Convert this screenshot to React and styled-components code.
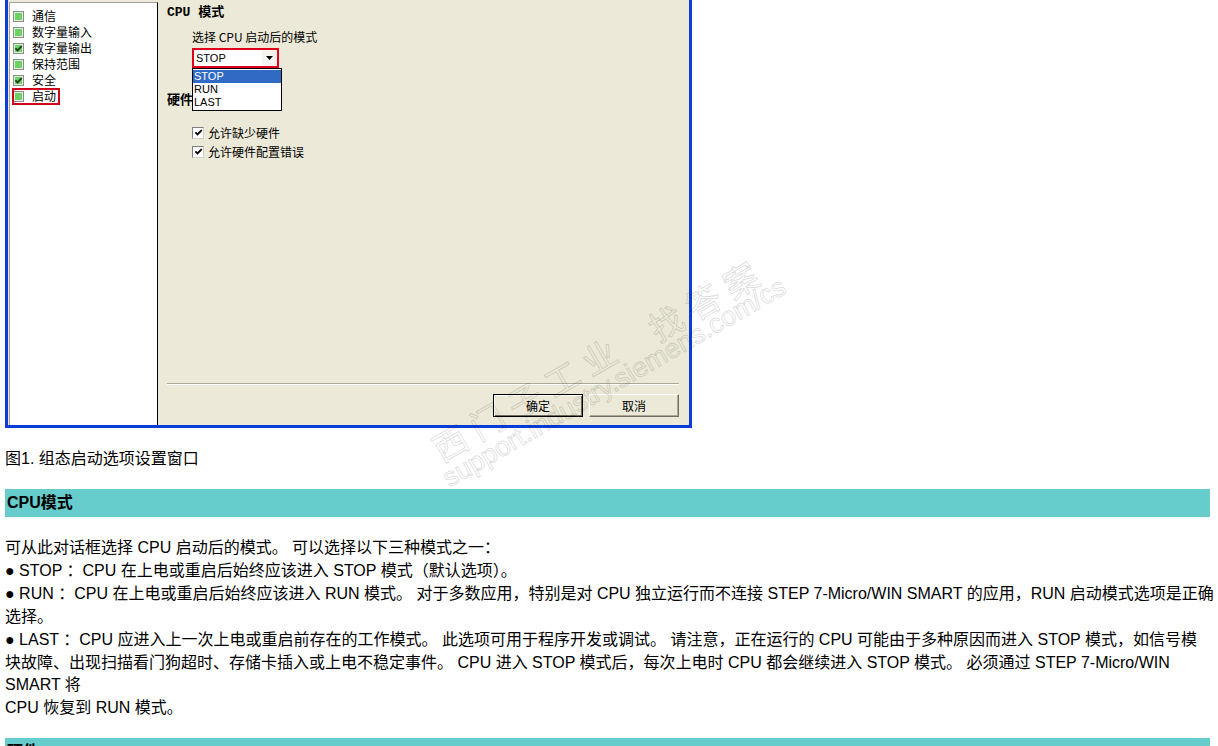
import styled, { createGlobalStyle } from 'styled-components'

const GlobalStyle = createGlobalStyle`
  html, body {
    margin: 0;
    padding: 0;
    overflow: hidden;
    background: #fff;
  }
  body {
    font-family: 'Liberation Sans', Arial, 'Noto Sans CJK SC', sans-serif;
    color: #000;
  }
`

const treeItems = [
  { label: '通信' },
  { label: '数字量输入' },
  { label: '数字量输出', checked: true },
  { label: '保持范围' },
  { label: '安全', checked: true },
  { label: '启动', marked: true },
]

const lines = [
  '可从此对话框选择 CPU 启动后的模式。 可以选择以下三种模式之一：',
  '● STOP ：CPU 在上电或重启后始终应该进入 STOP 模式（默认选项）。',
  '● RUN ：CPU 在上电或重启后始终应该进入 RUN 模式。 对于多数应用，特别是对 CPU 独立运行而不连接 STEP 7-Micro/WIN SMART 的应用，RUN 启动模式选项是正确',
  '选择。',
  '● LAST ：CPU 应进入上一次上电或重启前存在的工作模式。 此选项可用于程序开发或调试。 请注意，正在运行的 CPU 可能由于多种原因而进入 STOP 模式，如信号模',
  '块故障、出现扫描看门狗超时、存储卡插入或上电不稳定事件。 CPU 进入 STOP 模式后，每次上电时 CPU 都会继续进入 STOP 模式。 必须通过 STEP 7-Micro/WIN',
  'SMART 将',
  'CPU 恢复到 RUN 模式。',
]

const Tick = ({ color }) => (
  <svg width="9" height="9" viewBox="0 0 9 9">
    <path d="M1.4 4.3 L3.5 6.4 L7.7 2.1" fill="none" stroke={color} strokeWidth="1.8" />
  </svg>
)

const App = () => {
  return (
    <Page>
      <GlobalStyle />
      <Dialog>
        <Tree>
          {treeItems.map((item) => (
            <TreeRow key={item.label}>
              <TreeItem $marked={item.marked}>
                <TreeBox>{item.checked && <Tick color='#1d3f17' />}</TreeBox>
                {item.label}
              </TreeItem>
            </TreeRow>
          ))}
        </Tree>
        <Pane>
          <SectionTitle $top={0}>CPU 模式</SectionTitle>
          <Field>
            <FieldLabel>选择 CPU 启动后的模式</FieldLabel>
            <Select>
              <SelectValue>STOP</SelectValue>
              <ArrowButton>
                <svg width="7" height="4" viewBox="0 0 7 4">
                  <path d="M0 0 H7 L3.5 4 Z" fill='#000' />
                </svg>
              </ArrowButton>
            </Select>
            <Options>
              <Option $active>STOP</Option>
              <Option>RUN</Option>
              <Option>LAST</Option>
            </Options>
          </Field>
          <SectionTitle $top={26}>硬件选项</SectionTitle>
          <CheckList>
            <CheckRow>
              <CheckBox>
                <Tick color='#000' />
              </CheckBox>
              允许缺少硬件
            </CheckRow>
            <CheckRow>
              <CheckBox>
                <Tick color='#000' />
              </CheckBox>
              允许硬件配置错误
            </CheckRow>
          </CheckList>
          <Spacer />
          <Separator />
          <ButtonRow>
            <Button $default $w={90}>
              确定
            </Button>
            <Button $w={90}>取消</Button>
          </ButtonRow>
        </Pane>
      </Dialog>

      <Caption>图1. 组态启动选项设置窗口</Caption>
      <SectionBar $top={20}>CPU模式</SectionBar>
      <Body>
        {lines.map((line, i) => (
          <Line key={i}>{line}</Line>
        ))}
      </Body>
      <SectionBar $top={18}>硬件</SectionBar>

      <Watermark $x={435} $y={434} $size={34} $spacing={9} $cjk>
        西门子工业
      </Watermark>
      <Watermark $x={651} $y={314} $size={34} $spacing={9} $cjk>
        找答案
      </Watermark>
      <Watermark $x={445} $y={467} $size={27} $spacing={0}>
        support.industry.siemens.com/cs
      </Watermark>
    </Page>
  )
}

const Page = styled.div`
  position: relative;
  width: 1205px;
  padding: 0 8px 0 5px;
`

const Dialog = styled.div`
  box-sizing: border-box;
  width: 687px;
  height: 428px;
  display: flex;
  background: #ece9d8;
  border: 3px solid #0a3dd6;
  border-top: none;
  font-family: 'Noto Sans CJK SC', 'Liberation Sans', sans-serif;
  font-size: 12px;
`

const Tree = styled.ul`
  box-sizing: border-box;
  width: 149px;
  margin: 2px 0 0 1px;
  padding: 5px 0 0 3px;
  list-style: none;
  background: #fff;
  border-top: 1px solid #a0a0a0;
  border-left: 1px solid #a0a0a0;
  border-right: 1px solid #000;
`

const TreeRow = styled.li`
  height: 16px;
  display: flex;
  align-items: center;
`

const TreeItem = styled.span`
  display: inline-flex;
  align-items: center;
  gap: 8px;
  height: 15px;
  padding-right: 3px;
  line-height: 14px;
  outline: ${(p) => (p.$marked ? '2px solid #d3001c' : 'none')};
  outline-offset: -1px;
`

const TreeBox = styled.span`
  box-sizing: border-box;
  width: 11px;
  height: 11px;
  display: inline-flex;
  align-items: center;
  justify-content: center;
  border: 1px solid #8c8c8c;
  background: #6fd066;
  box-shadow: inset 0 0 0 1px #dff3da;
`

const Pane = styled.div`
  flex: 1;
  display: flex;
  flex-direction: column;
  padding: 6px 10px 8px 9px;
`

const SectionTitle = styled.div`
  margin-top: ${(p) => p.$top}px;
  font-family: 'Liberation Mono', 'Noto Sans CJK SC', monospace;
  font-size: 13px;
  font-weight: bold;
  line-height: 14px;
  white-space: nowrap;
`

const Field = styled.div`
  position: relative;
  width: max-content;
  margin: 10px 0 0 25px;
`

const FieldLabel = styled.div`
  line-height: 14px;
`

const Select = styled.div`
  box-sizing: border-box;
  width: 87px;
  height: 20px;
  margin-top: 4px;
  display: flex;
  align-items: stretch;
  border: 2px solid #e0001b;
  background: #fff;
`

const SelectValue = styled.span`
  flex: 1;
  padding-left: 2px;
  font-family: 'Liberation Sans', sans-serif;
  font-size: 11px;
  line-height: 16px;
`

const ArrowButton = styled.span`
  width: 15px;
  display: flex;
  align-items: center;
  justify-content: center;
  background: #f5f4ef;
`

const Options = styled.div`
  position: absolute;
  top: 38px;
  left: 0;
  z-index: 2;
  box-sizing: border-box;
  width: 90px;
  padding: 1px 0;
  border: 1px solid #000;
  background: #fff;
  font-family: 'Liberation Sans', sans-serif;
  font-size: 11px;
`

const Option = styled.div`
  height: 13px;
  padding-left: 1px;
  line-height: 13px;
  background: ${(p) => (p.$active ? '#316ac5' : '#fff')};
  color: ${(p) => (p.$active ? '#fff' : '#000')};
`

const CheckList = styled.div`
  margin: 15px 0 0 25px;
`

const CheckRow = styled.div`
  height: 19px;
  display: flex;
  align-items: center;
  gap: 4px;
  line-height: 14px;
`

const CheckBox = styled.span`
  box-sizing: border-box;
  width: 12px;
  height: 12px;
  display: inline-flex;
  align-items: center;
  justify-content: center;
  background: #fff;
  border: 1px solid #808080;
  border-right-color: #d4d0c8;
  border-bottom-color: #d4d0c8;
`

const Spacer = styled.div`
  flex: 1;
`

const Separator = styled.div`
  height: 1px;
  margin-bottom: 9px;
  background: #aca899;
  border-bottom: 1px solid #fff;
`

const ButtonRow = styled.div`
  display: flex;
  justify-content: flex-end;
  gap: 6px;
`

const Button = styled.button`
  box-sizing: border-box;
  width: ${(p) => p.$w}px;
  height: 23px;
  padding: 0;
  font-family: 'Noto Sans CJK SC', sans-serif;
  font-size: 12px;
  color: #000;
  background: #ece9d8;
  border: 1px solid;
  border-color: ${(p) => (p.$default ? '#000' : '#fff #716f64 #716f64 #fff')};
  box-shadow: ${(p) =>
    p.$default
      ? 'inset 1px 1px #fff, inset -1px -1px #716f64'
      : 'inset -1px -1px #aca899'};
`

const Caption = styled.p`
  margin: 21px 0 0;
  font-size: 16px;
  line-height: 20px;
`

const SectionBar = styled.h3`
  margin: ${(p) => p.$top}px 0 0;
  height: 28px;
  padding-left: 2px;
  background: #66cccc;
  font-size: 16px;
  font-weight: bold;
  line-height: 28px;
`

const Body = styled.div`
  margin-top: 20px;
  font-size: 16px;
  line-height: 22.9px;
`

const Line = styled.div`
  white-space: nowrap;
`

const Watermark = styled.span`
  position: absolute;
  left: ${(p) => p.$x}px;
  top: ${(p) => p.$y}px;
  font-family: ${(p) =>
    p.$cjk ? "'Noto Sans CJK SC', sans-serif" : "'Liberation Sans', sans-serif"};
  font-size: ${(p) => p.$size}px;
  letter-spacing: ${(p) => p.$spacing}px;
  line-height: 1;
  white-space: nowrap;
  color: transparent;
  -webkit-text-stroke: 1px rgba(0, 0, 0, 0.14);
  transform-origin: 0 50%;
  transform: rotate(-30deg);
  pointer-events: none;
`

export default App
